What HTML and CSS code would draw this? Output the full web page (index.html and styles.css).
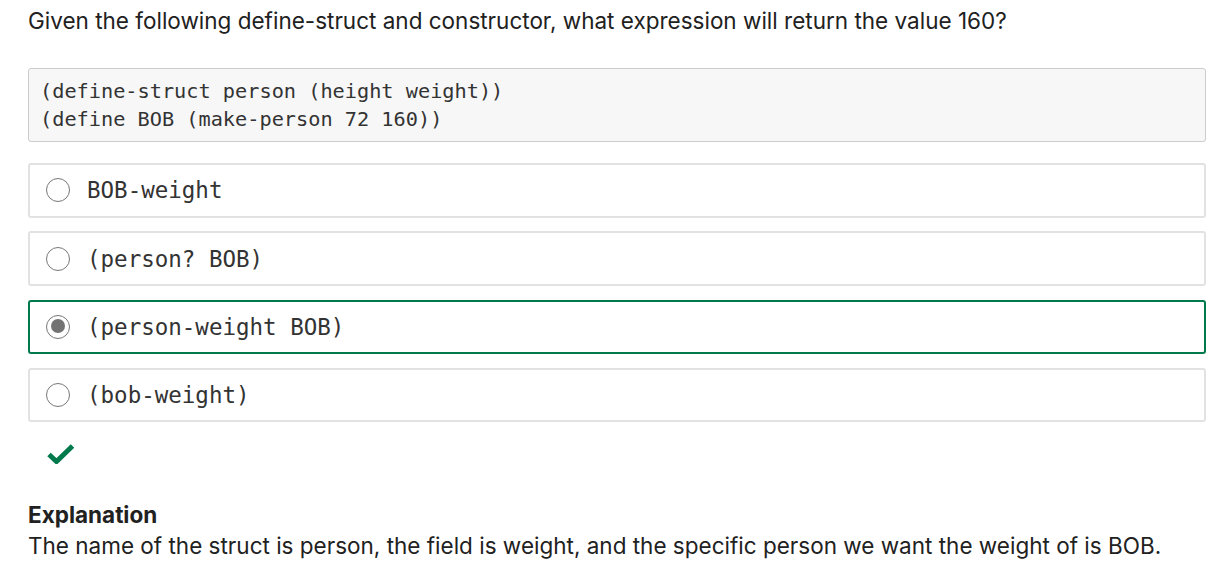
FILE: index.html
```html
<!DOCTYPE html>
<html>
<head>
<meta charset="utf-8">
<link rel="stylesheet" href="styles.css">
</head>
<body>
<div class="quiz">
  <p class="question">Given the following define-struct and constructor, what expression will return the value 160?</p>
  <pre class="code">(define-struct person (height weight))
(define BOB (make-person 72 160))</pre>
  <div class="options">
    <label class="option"><span class="radio"></span><span class="opt-text">BOB-weight</span></label>
    <label class="option"><span class="radio"></span><span class="opt-text">(person? BOB)</span></label>
    <label class="option selected"><span class="radio checked"></span><span class="opt-text">(person-weight BOB)</span></label>
    <label class="option"><span class="radio"></span><span class="opt-text">(bob-weight)</span></label>
  </div>
  <div class="result">
    <svg width="28" height="20" viewBox="0 0 28 20"><path d="M2 10.5 L9.5 17.5 L25.5 2" fill="none" stroke="#007a4d" stroke-width="5" stroke-linejoin="miter"/></svg>
  </div>
  <div class="explanation">
    <h4 class="exp-title">Explanation</h4>
    <p class="exp-text">The name of the struct is person, the field is weight, and the specific person we want the weight of is BOB.</p>
  </div>
</div>
</body>
</html>
```
FILE: styles.css
```css
html, body {
  margin: 0;
  padding: 0;
  background: #fff;
}
body {
  font-family: Inter, "Liberation Sans", sans-serif;
  color: #212121;
}
.quiz {
  padding: 6px 25px 0 28px;
}
.question {
  margin: 0;
  font-size: 22.5px;
  line-height: 30px;
}
.code {
  margin: 32px 0 0 0;
  padding: 8px 11px;
  background: #f7f7f7;
  border: 1px solid #cccccc;
  border-radius: 3px;
  font-family: "DejaVu Sans Mono", monospace;
  font-size: 20.25px;
  line-height: 28px;
  color: #333;
}
.options {
  margin-top: 21px;
  display: flex;
  flex-direction: column;
  gap: 13.75px;
}
.option {
  display: flex;
  align-items: center;
  height: 50.5px;
  border: 2px solid #e2e2e2;
  border-radius: 3px;
  padding-left: 16px;
}
.option.selected {
  border-color: #007a4d;
}
.radio {
  box-sizing: border-box;
  width: 24px;
  height: 24px;
  border: 1.5px solid #777;
  border-radius: 50%;
  flex: none;
  position: relative;
  background: #fff;
}
.radio.checked::after {
  content: "";
  position: absolute;
  left: 3.5px;
  top: 3.5px;
  width: 14px;
  height: 14px;
  border-radius: 50%;
  background: #737373;
}
.opt-text {
  margin-left: 17px;
  font-family: "DejaVu Sans Mono", monospace;
  font-size: 22.5px;
  color: #333;
}
.result {
  margin-top: 22px;
  padding-left: 19px;
  height: 22px;
}
.result svg {
  display: block;
}
.explanation {
  margin-top: 34px;
}
.exp-title {
  margin: 0;
  font-size: 22.5px;
  font-weight: 700;
  line-height: 30px;
}
.exp-text {
  margin: 0;
  font-size: 22.5px;
  line-height: 32px;
}
```
